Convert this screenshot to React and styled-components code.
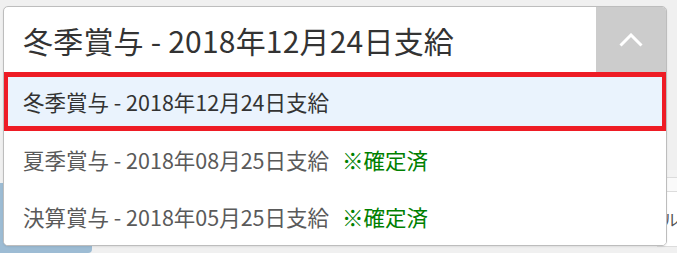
import React from 'react';
import styled, {createGlobalStyle} from 'styled-components';

const GlobalStyle = createGlobalStyle`
  html, body {
    margin: 0;
    padding: 0;
    background: #f0f0f0;
  }
  body {
    font-family: "Noto Sans CJK JP", "Noto Sans", sans-serif;
    width: 677px;
    height: 253px;
    overflow: hidden;
  }
`;

const Page = styled.div`
  position: relative;
  width: 677px;
  height: 253px;
  background: #f0f0f0;
  overflow: hidden;
`;

// content that sits under the open dropdown
const Backdrop = styled.div`
  display: flex;
  justify-content: space-between;
  align-items: flex-start;
  height: 100%;
  padding-top: 170px;
  box-sizing: border-box;
`;

const BlueButton = styled.div`
  width: 92px;
  height: 70px;
  margin-top: 13px;
  background: #9dbcd4;
  border-radius: 0 0 4px 0;
`;

const SidePanel = styled.div`
  width: 20px;
  height: 77px;
  display: flex;
  flex-direction: column;
`;

const PanelRow = styled.div`
  height: ${p => p.h}px;
  background: ${p => p.bg};
  border-bottom: 1px solid #dcdcdc;
  font-size: 16px;
  color: #555;
  line-height: ${p => p.h}px;
  white-space: nowrap;
  padding-left: 6px;
`;

const Dropdown = styled.div`
  position: absolute;
  left: 3px;
  top: 6px;
  width: 664px;
  background: #fff;
  border: 1px solid #bdbdbd;
  border-radius: 5px;
  box-sizing: border-box;
  overflow: hidden;
  box-shadow: 0 1px 2px rgba(0, 0, 0, 0.08);
`;

const Header = styled.div`
  display: flex;
  align-items: stretch;
  height: 65px;
`;

const Current = styled.div`
  flex: 1;
  display: flex;
  align-items: center;
  padding-left: 19px;
  font-size: 30px;
  color: #333;
  letter-spacing: 0.2px;
`;

const Toggle = styled.div`
  width: 70px;
  background: #cccccc;
  display: flex;
  align-items: center;
  justify-content: center;
`;

const List = styled.ul`
  list-style: none;
  margin: 0;
  padding: 0;
`;

const Option = styled.li`
  display: flex;
  align-items: center;
  gap: 13px;
  height: ${p => (p.active ? '59px' : '57px')};
  box-sizing: border-box;
  padding-left: ${p => (p.active ? '15px' : '19px')};
  margin: ${p => (p.active ? '0 -1px' : '0')};
  font-size: 21.5px;
  color: ${p => (p.active ? '#333' : '#5a5a5a')};
  background: ${p => (p.active ? '#eaf3fd' : '#fff')};
  border: ${p => (p.active ? '5px solid #ee1c25' : 'none')};
`;

const Fixed = styled.span`
  color: #008000;
`;

const options = [
  {label: '冬季賞与 - 2018年12月24日支給', active: true},
  {label: '夏季賞与 - 2018年08月25日支給', fixed: true},
  {label: '決算賞与 - 2018年05月25日支給', fixed: true},
];

function Chevron() {
  return (
    <svg width="24" height="14" viewBox="0 0 24 14" fill="none">
      <path d="M1.5 12.5 L12 2 L22.5 12.5" stroke="#fff" strokeWidth="3" />
    </svg>
  );
}

export default function App() {
  return (
    <Page>
      <GlobalStyle />
      <Backdrop>
        <BlueButton />
        <SidePanel>
          <PanelRow h={7} bg="#f3f3f3" />
          <PanelRow h={14} bg="#fafafa" />
          <PanelRow h={54} bg="#fff">ル</PanelRow>
        </SidePanel>
      </Backdrop>
      <Dropdown>
        <Header>
          <Current>冬季賞与 - 2018年12月24日支給</Current>
          <Toggle><Chevron /></Toggle>
        </Header>
        <List>
          {options.map(o => (
            <Option key={o.label} active={o.active}>
              <span>{o.label}</span>
              {o.fixed && <Fixed>※確定済</Fixed>}
            </Option>
          ))}
        </List>
      </Dropdown>
    </Page>
  );
}
